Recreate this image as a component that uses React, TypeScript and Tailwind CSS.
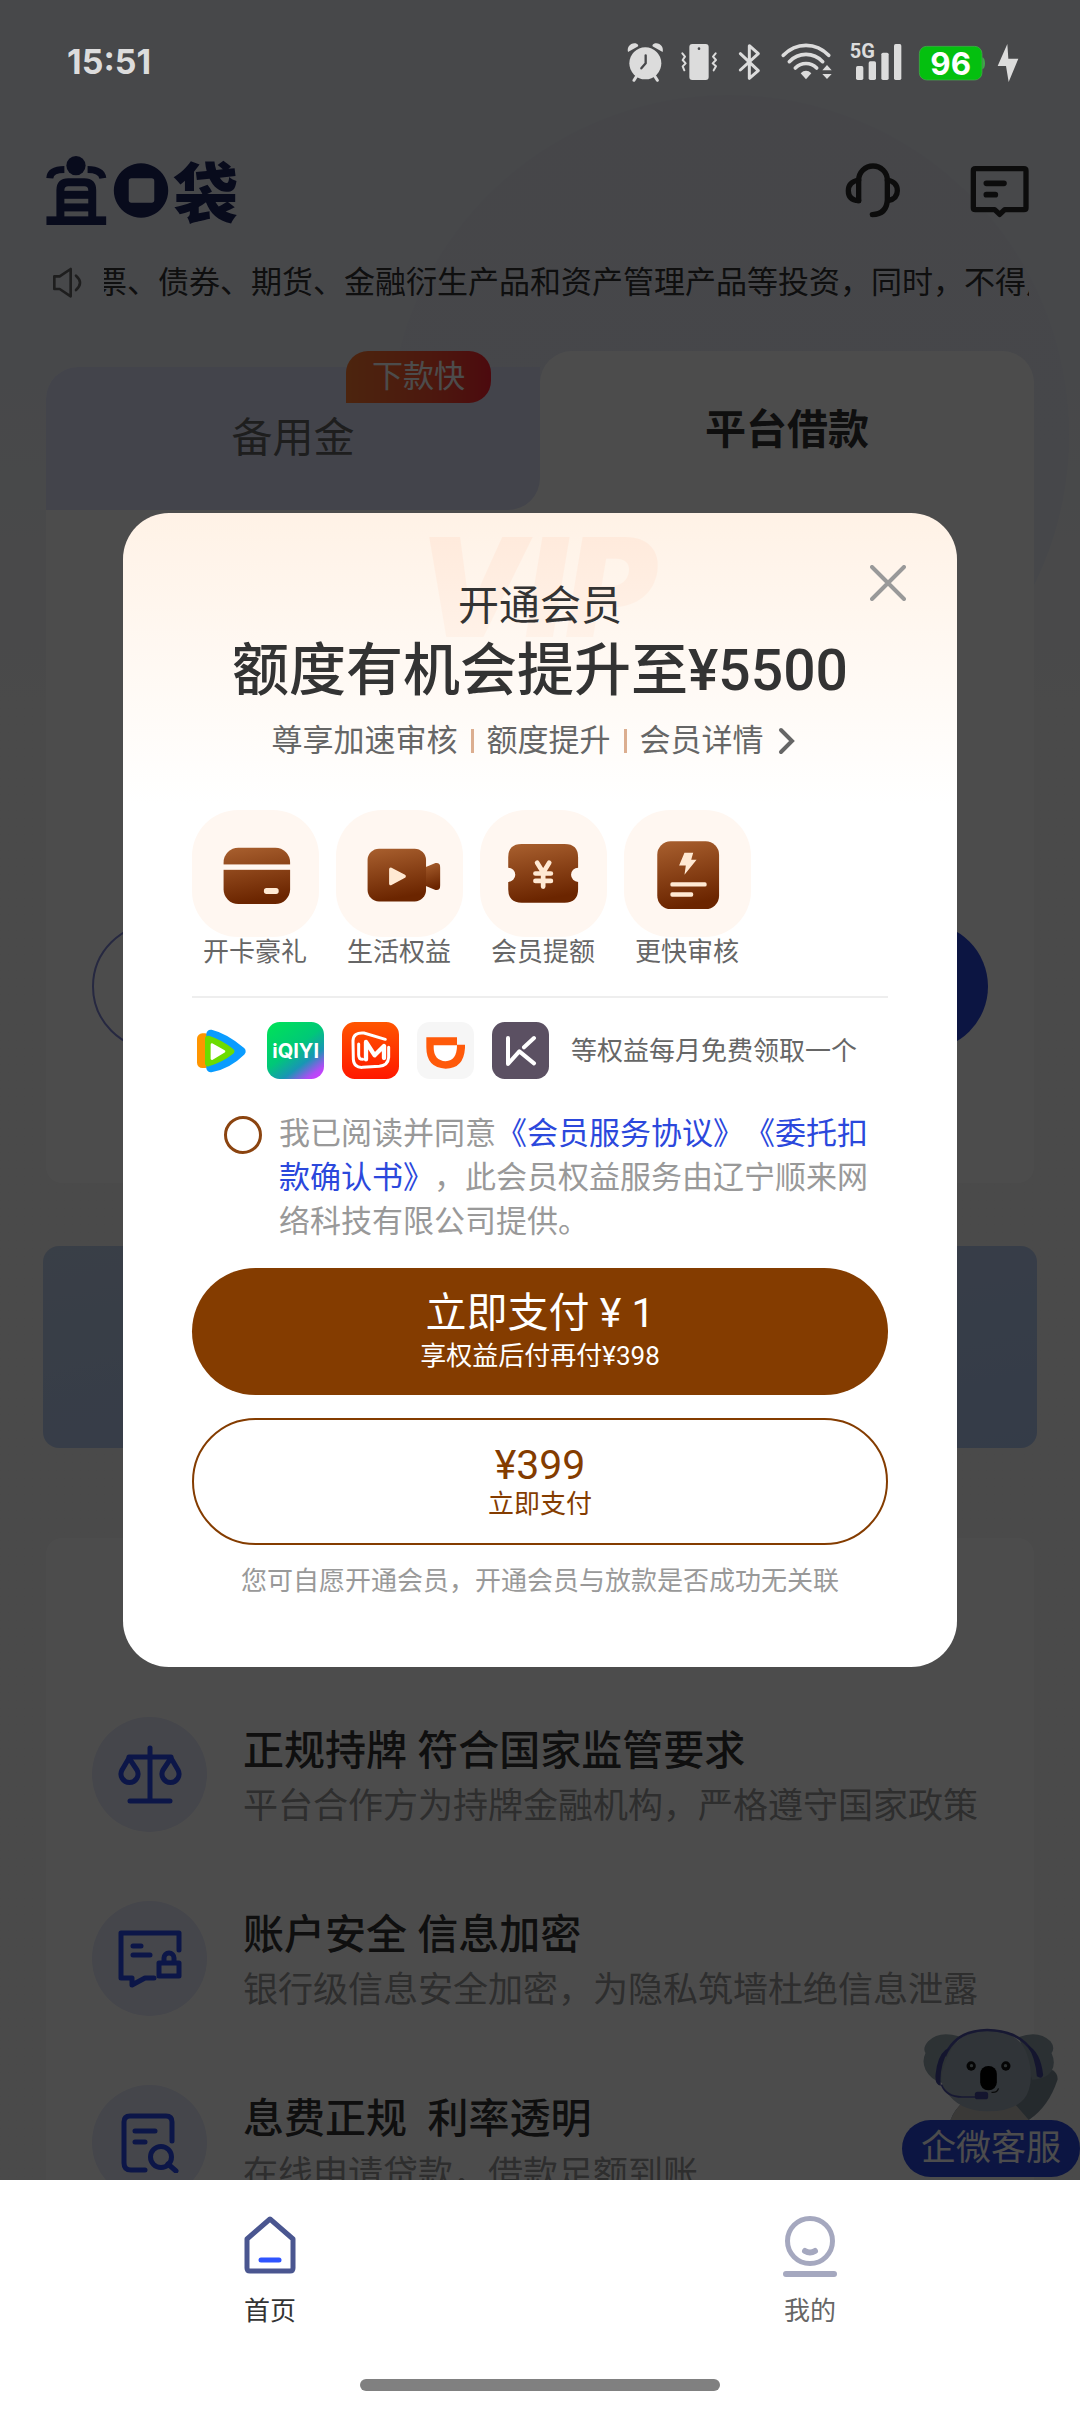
import { useState } from "react";
import type { ReactNode } from "react";

function StatusBar() {
  return (
    <header className="relative z-20 flex h-[124px] shrink-0 items-center justify-between pr-[61px] pl-[67px] text-[#dcdcdc]">
      <time className="font-['Inter'] text-[34px] leading-[40px] font-bold">15:51</time>
      <div className="flex items-center">
        <svg className="h-10 w-[38px]" viewBox="90 66 114 120" fill="currentColor" aria-label="闹钟">
          <circle cx="148" cy="130" r="48" />
          <path d="M96 96 C92 82 104 66 122 71 C128 74 128 78 124 80 Z" />
          <path d="M200 96 C204 82 192 66 174 71 C168 74 168 78 172 80 Z" />
          <path d="M122 168 L114 181 M176 168 L184 181" stroke="currentColor" strokeWidth="9" strokeLinecap="round" />
          <path d="M149 106 V130 L136 145" stroke="#47484b" strokeWidth="7" fill="none" strokeLinecap="round" strokeLinejoin="round" />
        </svg>
        <svg className="ml-4 h-10 w-[38px]" viewBox="255 66 114 120" fill="none" stroke="currentColor" strokeWidth="6" strokeLinecap="round" strokeLinejoin="round" aria-label="振动">
          <rect x="283" y="72" width="58" height="108" rx="9" fill="currentColor" stroke="none" />
          <circle cx="312" cy="86" r="4" fill="#47484b" stroke="none" />
          <path d="M262 100 L270 110 L263 120 L272 130 L263 139 L268 151" />
          <path d="M362 100 L354 110 L363 120 L353 130 L363 139 L356 151" />
        </svg>
        <svg className="ml-5 h-10 w-[23px]" viewBox="429 66 69 120" fill="none" stroke="currentColor" strokeWidth="9" strokeLinejoin="round" strokeLinecap="round" aria-label="蓝牙">
          <path d="M436 101 L490 152 L463 175 V77 L490 101 L436 150" />
        </svg>
        <svg className="ml-5 h-10 w-[52px]" viewBox="561 66 156 120" fill="none" stroke="currentColor" strokeWidth="11" strokeLinecap="round" aria-label="无线网络">
          <path d="M568 106 C606 66 666 66 704 106" />
          <path d="M586 125 C614 96 658 96 686 125" />
          <path d="M604 144 C622 126 650 126 668 144" />
          <path d="M620 160 C630 150 642 150 652 160 L636 178 Z" fill="currentColor" stroke="none" />
          <path d="M685 151 L699 135 L713 151 Z M685 162 L699 177 L713 162 Z" fill="currentColor" stroke="none" />
        </svg>
        <svg className="ml-4 h-10 w-[53px] overflow-visible" viewBox="753 66 159 120" fill="currentColor" aria-label="信号">
          <text x="755" y="115" fontSize="60" fontWeight="700" fontFamily="Roboto, sans-serif">5G</text>
          <rect x="774" y="138" width="22" height="42" rx="5" />
          <rect x="812" y="124" width="22" height="56" rx="5" />
          <rect x="850" y="98" width="22" height="82" rx="5" />
          <rect x="888" y="72" width="22" height="108" rx="5" />
        </svg>
        <svg className="ml-4 h-10 w-[67px]" viewBox="957 66 201 120" aria-label="电量">
          <path d="M1150 112 a8 18 0 0 1 0 36z" fill="#3fa54a" />
          <rect x="961" y="79" width="188" height="101" rx="22" fill="#04c00f" stroke="#4ba953" strokeWidth="2" />
          <text x="1055" y="164" textAnchor="middle" fill="#fff" fontSize="94" fontWeight="700" fontFamily="Inter, sans-serif">96</text>
        </svg>
        <svg className="ml-3 h-10 w-[22px]" viewBox="1191 66 66 120" fill="currentColor" aria-label="充电中">
          <path d="M1222 72 L1193 138 H1218 L1226 186 L1255 116 H1225 Z" />
        </svg>
      </div>
    </header>
  );
}

function Logo() {
  return (
    <h1 aria-label="宜口袋">
      <svg className="h-[69px] w-[190px] overflow-visible" viewBox="48 47 570 208" fill="#1d2660">
        <circle cx="137" cy="76" r="29" />
        <g fill="none" stroke="#1d2660">
          <path d="M58 114 Q60 88 102 88 M218 114 Q214 88 172 88" strokeWidth="21" />
          <path d="M90 235 V150 Q90 126 114 126 H162 Q186 126 186 150 V235" strokeWidth="24" />
        </g>
        <rect x="98" y="152" width="80" height="24" />
        <rect x="98" y="190" width="80" height="24" />
        <rect x="48" y="229" width="180" height="26" />
        <path fillRule="evenodd" d="M333 69 a82 82 0 1 0 0.1 0z M304 114 h61 a8 8 0 0 1 8 8 v58 a8 8 0 0 1 -8 8 h-61 a8 8 0 0 1 -8 -8 v-58 a8 8 0 0 1 8 -8z" />
        <text x="430" y="232" fontSize="196" fontWeight="900" fontFamily="'Noto Sans CJK SC', sans-serif">袋</text>
      </svg>
    </h1>
  );
}

function TopBar() {
  return (
    <div className="flex items-center justify-between pt-8 pr-[50px] pl-[46px]">
      <Logo />
      <div className="flex items-center gap-[68px]">
        <button type="button" aria-label="客服">
          <svg className="h-[57px] w-[57px]" viewBox="732 426 171 171" fill="none" stroke="#2b2b2b" strokeWidth="16" strokeLinecap="round">
            <path d="M776 542 V481 A43 43 0 0 1 862 481 V540 Q860 582 817 584" />
            <path d="M776 480 Q745 486 745 512 Q745 540 776 542 M862 480 Q892 486 892 512 Q892 536 864 542" />
          </svg>
        </button>
        <button type="button" aria-label="消息">
          <svg className="h-[57px] w-[61px]" viewBox="1107 430 183 171" fill="none" stroke="#2b2b2b" strokeWidth="16" strokeLinecap="round" strokeLinejoin="round">
            <path d="M1126 450 H1272 Q1278 450 1278 456 V568 Q1278 573 1272 573 H1214 L1199 587 L1184 573 H1126 Q1120 573 1120 568 V456 Q1120 450 1126 450Z" />
            <path d="M1159 494 H1212 M1159 528 H1186" strokeWidth="17" />
          </svg>
        </button>
      </div>
    </div>
  );
}

function Notice() {
  return (
    <div className="mt-[35px] flex items-center gap-5 pr-[51px] pl-[52px]">
      <svg className="h-8 w-8 shrink-0" viewBox="68 378 96 96" fill="none" stroke="#666" strokeWidth="8" strokeLinejoin="round" strokeLinecap="round">
        <path d="M75 406 H91 L124 384 V466 L91 444 H75 Z M140 404 Q164 425 140 447" />
      </svg>
      <div className="flex-1 overflow-hidden">
        <p className="-ml-2 text-[31px] leading-[46px] whitespace-nowrap text-[#333]">
          票、债券、期货、金融衍生产品和资产管理产品等投资，同时，不得用
        </p>
      </div>
    </div>
  );
}

function LoanTabs() {
  return (
    <div className="mx-[46px] mt-[45px]">
      <div className="flex items-end" role="tablist">
        <div className="relative flex-1 rounded-tl-[32px] bg-white">
          <button type="button" role="tab" aria-selected="false" className="h-[143px] w-full rounded-tl-[32px] rounded-br-[32px] bg-[#e0e4fb] text-[41px] text-[#666]">
            备用金
          </button>
          <span className="absolute -top-4 right-[49px] flex h-[52px] w-[145px] items-center justify-center rounded-t-[22px] rounded-br-[22px] bg-linear-to-r from-[#ff7a30] to-[#ff2030] text-[31px] text-white">
            下款快
          </span>
        </div>
        <button type="button" role="tab" aria-selected="true" className="h-[159px] flex-1 rounded-t-[32px] bg-white text-[41px] font-bold text-[#333]">
          平台借款
        </button>
      </div>
      <div className="flex gap-8 rounded-b-2xl bg-white px-[46px] pt-[413px] pb-[133px]">
        <button type="button" aria-label="查看额度" className="h-[127px] flex-1 rounded-full border-2 border-[#7f86d8]" />
        <button type="button" aria-label="立即借款" className="h-[127px] flex-1 rounded-full bg-[#2b48dc]" />
      </div>
    </div>
  );
}

function ScalesIcon() {
  return (
    <svg className="h-[60px] w-16" viewBox="0 0 64 60" fill="none" stroke="#284af0" strokeWidth="5" strokeLinecap="round" strokeLinejoin="round">
      <path d="M32 3 V55 M12 56 H52 M11 12 H53" />
      <path d="M11 13 L4 25 A8.5 8.5 0 1 0 19 25 Z M53 13 L45 25 A8.5 8.5 0 1 0 60 25 Z" />
    </svg>
  );
}

function LockMessageIcon() {
  return (
    <svg className="h-[60px] w-16" viewBox="0 0 64 60" fill="none" stroke="#284af0" strokeWidth="5" strokeLinecap="round" strokeLinejoin="round">
      <path d="M61 21 V4 H3 V49 H14 V56 L27 49 H36" />
      <path d="M15 17 H23 M15 26 H32" />
      <path d="M41 34 H61 V47 H41 Z M46 33 V29 A4.5 4.5 0 0 1 56 29 V33" />
    </svg>
  );
}

function SearchDocIcon() {
  return (
    <svg className="h-[60px] w-[60px]" viewBox="0 0 60 60" fill="none" stroke="#284af0" strokeWidth="5" strokeLinecap="round" strokeLinejoin="round">
      <path d="M52 28 V9 Q52 3 46 3 H10 Q4 3 4 9 V50 Q4 57 11 57 H25" />
      <path d="M15 18 H35 M15 29 H25 M48 51 L56 58" />
      <circle cx="41" cy="44" r="10.5" />
    </svg>
  );
}

const features: { title: string; text: string; icon: ReactNode }[] = [
  { title: "正规持牌 符合国家监管要求", text: "平台合作方为持牌金融机构，严格遵守国家政策", icon: <ScalesIcon /> },
  { title: "账户安全 信息加密", text: "银行级信息安全加密，为隐私筑墙杜绝信息泄露", icon: <LockMessageIcon /> },
  { title: "息费正规  利率透明", text: "在线申请贷款，借款足额到账", icon: <SearchDocIcon /> },
];

function Features() {
  return (
    <ul className="mx-[46px] mt-[90px] flex flex-col gap-[69px] rounded-t-2xl bg-white px-[46px] pt-[179px]">
      {features.map((f) => (
        <li key={f.title} className="flex h-[115px] gap-9">
          <span className="flex size-[115px] shrink-0 items-center justify-center rounded-full bg-[#e6e9fa]">{f.icon}</span>
          <div className="pt-[6px] whitespace-pre">
            <h2 className="text-[41px] leading-[56px] font-medium text-[#333]">{f.title}</h2>
            <p className="text-[35px] leading-[56px] text-[#999]">{f.text}</p>
          </div>
        </li>
      ))}
    </ul>
  );
}

function Koala() {
  return (
    <svg className="h-[92px] w-[137px]" viewBox="190 85 410 276">
      <path d="M505 205 Q600 195 596 240 Q570 320 510 361 H275 Q285 330 320 300 Z" fill="#7c8c98" />
      <path d="M300 110 Q240 92 208 125 Q190 145 200 160 Q188 185 200 210 Q215 240 250 250 Z" fill="#96a8b0" />
      <path d="M480 112 Q540 90 575 125 Q590 145 578 160 Q592 190 578 215 Q560 240 520 240 Z" fill="#8fa1aa" />
      <path d="M275 361 Q285 335 305 315 H470 L510 361 Z" fill="#c3bfba" />
      <path d="M385 92 Q300 95 272 160 Q230 240 262 275 Q300 335 385 335 Q490 335 510 270 Q525 225 505 165 Q480 92 385 92Z" fill="#a0aebb" />
      <path d="M258 170 Q290 92 385 91 Q480 92 522 158" fill="none" stroke="#4f53a8" strokeWidth="8" />
      <path d="M260 150 Q235 170 230 225 Q228 258 246 258 Q240 200 272 145 Z M505 135 Q545 155 553 225 Q550 240 534 230 Q530 175 505 135Z" fill="#43489c" />
      <path d="M248 255 Q262 292 310 292 H355" fill="none" stroke="#4f53a8" strokeWidth="5" />
      <circle cx="337" cy="199" r="14" fill="#111" />
      <circle cx="441" cy="199" r="14" fill="#111" />
      <circle cx="338" cy="198" r="5" fill="#9aa" />
      <circle cx="440" cy="198" r="5" fill="#9aa" />
      <rect x="364" y="199" width="50" height="73" rx="24" fill="#000" />
      <path d="M398 278 Q415 280 419 266" fill="none" stroke="#222" strokeWidth="4" />
      <rect x="348" y="276" width="40" height="23" rx="8" fill="#43489c" />
    </svg>
  );
}

function BenefitCard() {
  return (
    <>
      <rect x="94" y="112" width="198" height="168" rx="44" fill="url(#brown)" />
      <rect x="90" y="162" width="206" height="16" fill="#fff7f1" />
      <rect x="214" y="232" width="44" height="18" rx="8" fill="#ffe9d3" />
    </>
  );
}

function BenefitVideo() {
  return (
    <>
      <path d="M262 172 L296 158 Q310 156 310 170 V226 Q310 240 296 238 L262 224 Z" fill="url(#brown)" />
      <rect x="94" y="115" width="174" height="157" rx="34" fill="url(#brown)" />
      <path d="M163 176 L203 197 L163 219 Z" fill="#ffe9d3" stroke="#ffe9d3" strokeWidth="10" strokeLinejoin="round" />
    </>
  );
}

function BenefitCoupon() {
  return (
    <>
      <path
        d="M124 101 H252 Q292 101 292 141 V172 A21 21 0 0 0 292 214 V236 Q292 276 252 276 H124 Q84 276 84 236 V214 A21 21 0 0 0 84 172 V141 Q84 101 124 101Z"
        fill="url(#brown)"
      />
      <path d="M170 157 L188 186 L206 157 M188 186 V228 M165 189 H211 M165 211 H211" fill="none" stroke="#ffe9d3" strokeWidth="14" strokeLinecap="round" strokeLinejoin="round" />
    </>
  );
}

function BenefitFast() {
  return (
    <>
      <rect x="99" y="93" width="184" height="202" rx="40" fill="url(#brown)" />
      <path d="M180 127 H206 L200 148 H216 L180 193 L184 165 H164 Z" fill="#ffe9d3" />
      <rect x="138" y="215" width="108" height="13" rx="5" fill="#ffe9d3" />
      <rect x="138" y="245" width="68" height="13" rx="5" fill="#ffe9d3" />
    </>
  );
}

const benefits: { label: string; art: ReactNode }[] = [
  { label: "开卡豪礼", art: <BenefitCard /> },
  { label: "生活权益", art: <BenefitVideo /> },
  { label: "会员提额", art: <BenefitCoupon /> },
  { label: "更快审核", art: <BenefitFast /> },
];

function Benefits() {
  return (
    <>
      <svg className="absolute size-0" aria-hidden="true">
        <defs>
          <linearGradient id="brown" x1="0" y1="0" x2="0.2" y2="1">
            <stop offset="0" stopColor="#a9602f" />
            <stop offset="1" stopColor="#6b2500" />
          </linearGradient>
        </defs>
      </svg>
      <ul className="mt-[46px] flex gap-[18px]">
        {benefits.map((b) => (
          <li key={b.label} className="flex w-[126px] flex-col items-center">
            <svg className="size-[127px] rounded-[46px] bg-[#fff7f1]" viewBox="0 0 378 378">
              {b.art}
            </svg>
            <span className="text-[26px] leading-[30px] text-[#666]">{b.label}</span>
          </li>
        ))}
      </ul>
    </>
  );
}

function Partners() {
  return (
    <div className="mt-6 flex items-center gap-[18px]">
      <svg className="size-[57px]" viewBox="0 0 171 171" aria-label="腾讯视频">
        <rect x="15" y="34" width="40" height="104" rx="16" fill="#ff9500" />
        <path d="M56 36 Q98 46 148 88 Q108 128 56 138 Z" fill="#0a9cff" stroke="#0a9cff" strokeWidth="26" strokeLinejoin="round" />
        <path d="M48 50 Q85 62 118 88 Q88 112 48 124 Z" fill="#6ddc00" stroke="#6ddc00" strokeWidth="18" strokeLinejoin="round" />
        <path d="M60 68 L96 88 L60 110 Z" fill="#fff" stroke="#fff" strokeWidth="8" strokeLinejoin="round" />
      </svg>
      <svg className="size-[57px]" viewBox="0 0 171 171" aria-label="爱奇艺">
        <defs>
          <linearGradient id="qiyi" x1="0.15" y1="0" x2="0.9" y2="1">
            <stop offset="0" stopColor="#00e05a" />
            <stop offset="0.45" stopColor="#00c878" />
            <stop offset="0.7" stopColor="#1896b4" />
            <stop offset="0.9" stopColor="#b04cf5" />
            <stop offset="1" stopColor="#d03cff" />
          </linearGradient>
        </defs>
        <rect width="171" height="171" rx="38" fill="url(#qiyi)" />
        <text x="86" y="107" textAnchor="middle" fontSize="60" fontWeight="700" fill="#fff" fontFamily="Inter, sans-serif">iQIYI</text>
      </svg>
      <svg className="size-[57px]" viewBox="0 0 171 171" fill="none" stroke="#fff" aria-label="芒果TV">
        <defs>
          <linearGradient id="mango" x1="0" y1="0" x2="0" y2="1">
            <stop offset="0" stopColor="#ff5500" />
            <stop offset="1" stopColor="#ff1800" />
          </linearGradient>
        </defs>
        <rect width="171" height="171" rx="38" fill="url(#mango)" stroke="none" />
        <path d="M130 52 L66 33 Q34 30 33 56 L34 112 Q36 138 62 136 L112 133 Q138 130 140 106 V76 M62 112 Q50 112 50 98 V66" strokeWidth="9" strokeLinecap="round" />
        <path d="M72 112 V60 L98 100 L126 72 V108" strokeWidth="13" strokeLinejoin="round" strokeLinecap="round" />
      </svg>
      <svg className="size-[57px]" viewBox="0 0 171 171" aria-label="滴滴出行">
        <rect width="171" height="171" rx="38" fill="#f6f6f6" />
        <path d="M28 46 H120 V68 H144 V78 Q140 140 86 140 Q28 138 28 76 Z" fill="#ff5a0a" />
        <path d="M50 70 H120 Q120 116 86 118 Q50 116 50 76 Z" fill="#fff" />
      </svg>
      <svg className="size-[57px]" viewBox="0 0 171 171" fill="none" stroke="#fff" strokeWidth="12" strokeLinecap="round" strokeLinejoin="round" aria-label="Keep">
        <rect width="171" height="171" rx="38" fill="#5b5062" stroke="none" />
        <path d="M48 48 V126 L82 88 L126 124 M126 48 L96 76" />
      </svg>
      <p className="ml-1 text-[26px] leading-[36px] text-[#666]">等权益每月免费领取一个</p>
    </div>
  );
}

function MemberDialog({ onClose }: { onClose: () => void }) {
  const [agreed, setAgreed] = useState(false);
  return (
    <div
      role="dialog"
      aria-modal="true"
      aria-labelledby="member-title"
      className="relative w-full rounded-[46px] bg-white bg-linear-to-b from-[#fff2e6] to-white to-[290px] px-[69px] pt-[63px] pb-[68px]"
    >
      <div
        aria-hidden="true"
        className="absolute inset-x-0 top-1 bg-linear-to-b from-[#ffe9da] to-[#fff3ea] bg-clip-text pr-2 text-center font-['Inter'] text-[138px] leading-[140px] font-black text-transparent italic"
      >
        VIP
      </div>
      <button type="button" aria-label="关闭" onClick={onClose} className="absolute top-[50px] right-[49px] flex size-10 items-center justify-center">
        <svg className="size-9" viewBox="0 0 36 36" fill="none" stroke="#999" strokeWidth="4" strokeLinecap="round">
          <path d="M2 2 L34 34 M34 2 L2 34" />
        </svg>
      </button>
      <div className="relative flex flex-col items-center">
        <p className="text-[41px] leading-[60px] text-[#333]">开通会员</p>
        <h2 id="member-title" className="text-[57px] leading-[70px] font-medium whitespace-nowrap text-[#333]">
          额度有机会提升至¥5500
        </h2>
        <a href="#member" className="mt-3 mr-3 flex items-center gap-[13px] text-[31px] leading-[46px] text-[#666]">
          <span>尊享加速审核</span>
          <span className="h-6 w-[3px] bg-[#dcae90]" />
          <span>额度提升</span>
          <span className="h-6 w-[3px] bg-[#dcae90]" />
          <span>会员详情</span>
          <svg className="h-7 w-5" viewBox="0 0 20 28" fill="none" stroke="#666" strokeWidth="4" strokeLinecap="round">
            <path d="M4 3 L15 14 L4 25" />
          </svg>
        </a>
      </div>
      <Benefits />
      <hr className="mt-[29px] border-t-2 border-[#eee]" />
      <Partners />
      <div className="mt-[33px] flex items-start gap-[17px] pr-[19px] pl-8">
        <input
          id="agree"
          type="checkbox"
          checked={agreed}
          onChange={(e) => setAgreed(e.target.checked)}
          className="mt-1 size-[38px] shrink-0 appearance-none rounded-full border-[3px] border-[#8b4410] checked:bg-[#8b4410]"
        />
        <label htmlFor="agree" className="text-[31px] leading-[44px] text-[#999]">
          我已阅读并同意
          <a href="#service" className="text-[#2b48dc]">《会员服务协议》</a>
          <a href="#deduct" className="text-[#2b48dc]">《委托扣款确认书》</a>
          ，此会员权益服务由辽宁顺来网络科技有限公司提供。
        </label>
      </div>
      <button type="button" className="mt-6 flex h-[127px] w-full flex-col items-center justify-center rounded-full bg-[#843c00] text-white">
        <span className="text-[41px] leading-[48px] whitespace-pre">立即支付 ¥ 1</span>
        <span className="text-[26px] leading-[38px]">享权益后付再付¥398</span>
      </button>
      <button type="button" className="mt-[23px] flex h-[127px] w-full flex-col items-center justify-center rounded-full border-2 border-[#843c00] text-[#843c00]">
        <span className="text-[41px] leading-[44px]">¥399</span>
        <span className="text-[26px] leading-[34px]">立即支付</span>
      </button>
      <p className="mt-[18px] text-center text-[26px] leading-[36px] whitespace-nowrap text-[#999]">
        您可自愿开通会员，开通会员与放款是否成功无关联
      </p>
    </div>
  );
}

function BottomNav() {
  return (
    <nav className="flex shrink-0 flex-col items-center bg-white pt-[34px] pb-[21px]">
      <div className="flex w-full">
        <a href="#home" aria-current="page" className="flex flex-1 flex-col items-center text-[#333]">
          <svg className="size-[62px]" viewBox="0 0 62 62" fill="none" strokeLinecap="round" strokeLinejoin="round">
            <path d="M31 5 L54 25 V54 Q54 57 51 57 H11 Q8 57 8 54 V25 Z" stroke="#4a5690" strokeWidth="5" />
            <path d="M22 46 H40" stroke="#2f54ff" strokeWidth="5" />
          </svg>
          <span className="mt-4 text-[26px] leading-[38px]">首页</span>
        </a>
        <a href="#mine" className="flex flex-1 flex-col items-center text-[#666]">
          <svg className="size-[64px]" viewBox="0 0 64 64" fill="none" stroke="#a5a8bf" strokeWidth="5" strokeLinecap="round">
            <circle cx="32" cy="27" r="22.5" />
            <path d="M27 37 Q32 40 37 37 M8 60 H56" strokeWidth="6" />
          </svg>
          <span className="mt-[14px] text-[26px] leading-[38px]">我的</span>
        </a>
      </div>
      <div className="mt-[49px] h-3 w-1/3 rounded-full bg-[#808080]" />
    </nav>
  );
}

export default function App() {
  const [open, setOpen] = useState(true);
  return (
    <div className="flex h-screen flex-col bg-white font-['Roboto','Noto_Sans_CJK_SC',sans-serif] [text-spacing-trim:space-all]" lang="zh-CN">
      <main className="relative flex min-h-0 flex-1 flex-col overflow-hidden bg-[#f7f7f7] bg-linear-to-b from-[#edf0f9] from-[300px] to-[#f7f7f7] to-[700px]">
        <div className="absolute top-[95px] left-[36%] size-[680px] rounded-full bg-linear-to-b from-[#e9ecf5] to-[#e9eefa]" />
        <StatusBar />
        <div className="relative">
          <TopBar />
          <Notice />
          <LoanTabs />
          <div className="mx-[43px] mt-[63px] h-[202px] rounded-2xl bg-linear-to-br from-[#c0d2ee] to-[#b0c8f2]" />
          <Features />
        </div>
        <button type="button" className="absolute right-0 bottom-[3px] flex flex-col items-center">
          <Koala />
          <span className="rounded-full bg-[#2b48dc] px-[19px] text-[35px] leading-[57px] text-white">企微客服</span>
        </button>
        {open && (
          <div className="absolute inset-0 z-10 flex items-center justify-center bg-black/70 px-[123px]">
            <MemberDialog onClose={() => setOpen(false)} />
          </div>
        )}
      </main>
      <BottomNav />
    </div>
  );
}
